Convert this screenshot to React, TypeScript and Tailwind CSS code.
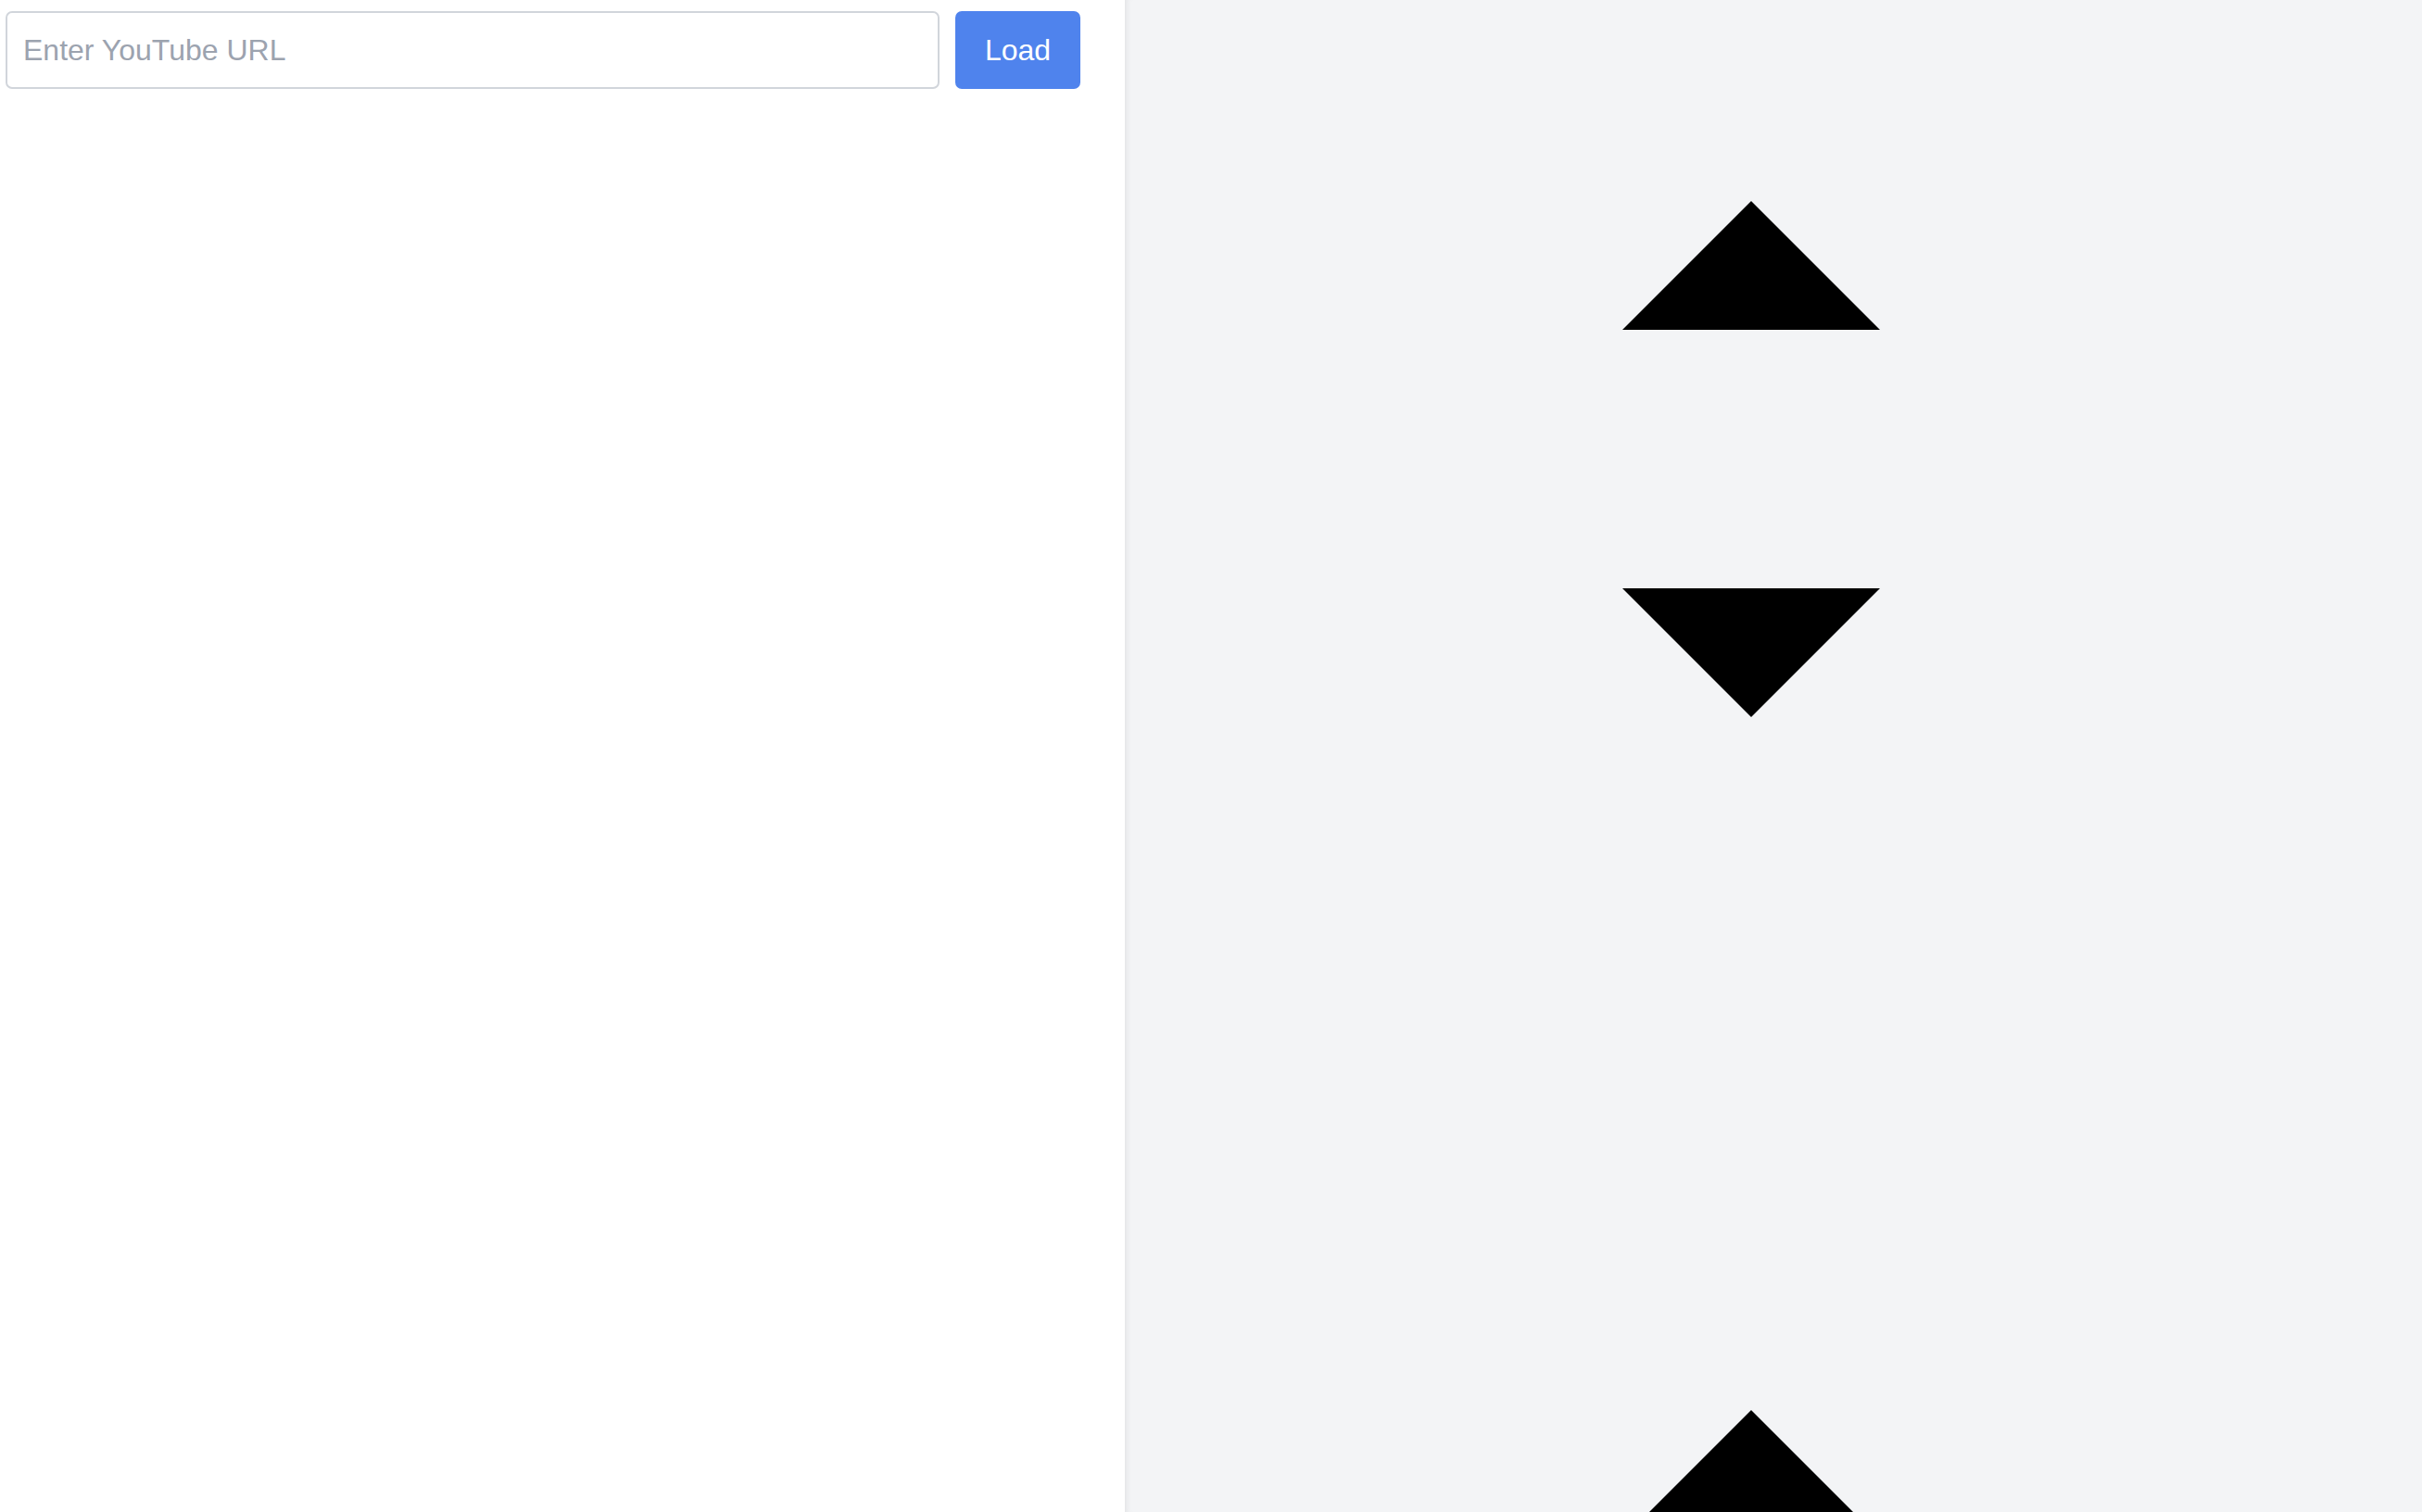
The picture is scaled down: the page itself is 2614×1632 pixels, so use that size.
import React from "react";

export default function App() {
  return (
    <div
      className="flex h-[1632px] w-full overflow-hidden"
      style={{ fontFamily: '"Liberation Sans", Arial, sans-serif' }}
    >
      <div className="w-[1214px] shrink-0 bg-white pl-[6px] pt-[12px]">
        <div className="flex items-start">
          <input
            type="text"
            placeholder="Enter YouTube URL"
            className="h-[84px] w-[1008px] rounded-[7px] border-2 border-[#d1d5db] bg-white px-[17px] text-[32px] text-gray-900 outline-none placeholder:text-[#9ca3af]"
          />
          <button className="ml-[17px] h-[84px] w-[135px] rounded-[7px] bg-[#4f83ed] text-[32px] text-white">
            Load
          </button>
        </div>
      </div>
      <div className="flex flex-1 flex-col items-center bg-[#f3f4f6] pr-[48px] pt-[217px] shadow-[inset_7px_0_6px_-5px_rgba(0,0,0,0.07)]">
        <div className="h-0 w-0 border-x-[139px] border-b-[139px] border-x-transparent border-b-black" />
        <div className="mt-[279px] h-0 w-0 border-x-[139px] border-t-[139px] border-x-transparent border-t-black" />
        <div className="mt-[748px] h-0 w-0 shrink-0 border-x-[139px] border-b-[139px] border-x-transparent border-b-black" />
      </div>
    </div>
  );
}
